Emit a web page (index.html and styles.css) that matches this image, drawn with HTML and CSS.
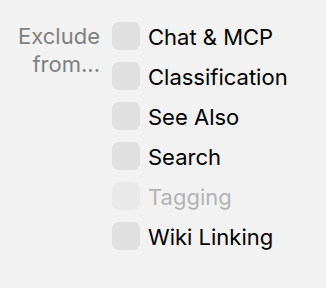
FILE: index.html
```html
<!DOCTYPE html>
<html>
<head>
<meta charset="utf-8">
<link rel="stylesheet" href="styles.css">
</head>
<body>
<div class="form">
  <div class="label">Exclude<br>from...</div>
  <div class="options">
    <label class="opt"><span class="box"></span><span class="text">Chat &amp; MCP</span></label>
    <label class="opt"><span class="box"></span><span class="text">Classification</span></label>
    <label class="opt"><span class="box"></span><span class="text">See Also</span></label>
    <label class="opt"><span class="box"></span><span class="text">Search</span></label>
    <label class="opt disabled"><span class="box"></span><span class="text">Tagging</span></label>
    <label class="opt"><span class="box"></span><span class="text">Wiki Linking</span></label>
  </div>
</div>
</body>
</html>
```
FILE: styles.css
```css
html, body {
  margin: 0;
  padding: 0;
  background: #f2f2f2;
  width: 326px;
  height: 288px;
  overflow: hidden;
}
body {
  font-family: Inter, "Liberation Sans", Arial, sans-serif;
  font-size: 22px;
}
.form {
  display: flex;
  align-items: flex-start;
  gap: 12px;
  padding-top: 22px;
}
.label {
  width: 100px;
  text-align: right;
  color: #808080;
  line-height: 28px;
}
.options {
  display: flex;
  flex-direction: column;
  gap: 12px;
}
.opt {
  display: flex;
  align-items: center;
  gap: 8px;
  height: 28px;
}
.box {
  width: 28px;
  height: 28px;
  border-radius: 7px;
  background: #e0e0e0;
  flex: none;
}
.text {
  line-height: 28px;
  padding-top: 1px;
  color: #000;
}
.disabled .box {
  background: #e9e9e9;
}
.disabled .text {
  color: #b3b3b3;
}
```
